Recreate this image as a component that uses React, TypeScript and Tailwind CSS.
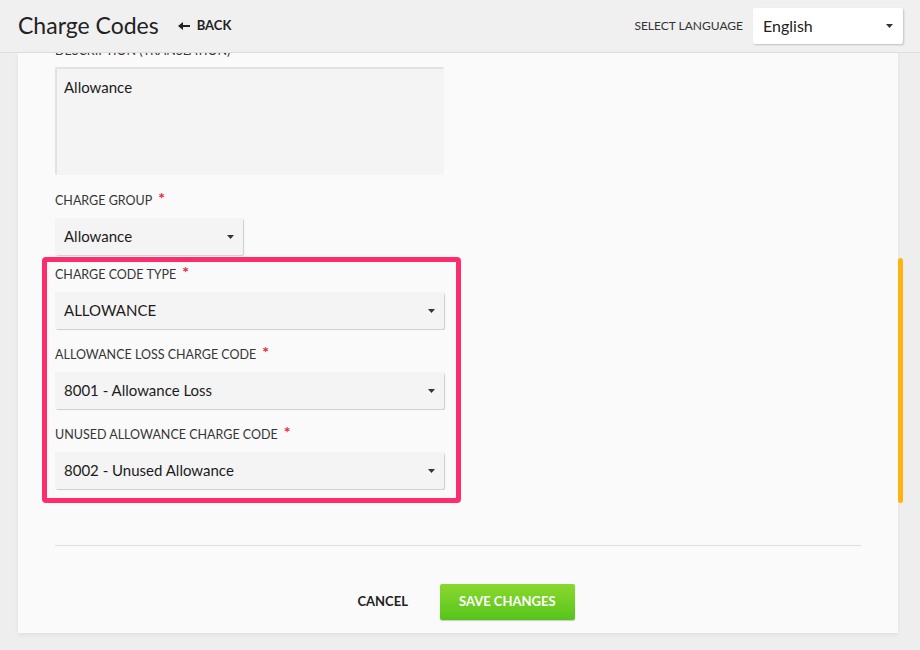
import React from "react";

function Caret() {
  return (
    <svg width="7" height="4" viewBox="0 0 7 4" className="shrink-0">
      <path d="M0 0h7L3.5 4z" fill="#333" />
    </svg>
  );
}

function Label({ text, required }: { text: string; required?: boolean }) {
  return (
    <div className="h-4 text-[12.5px] leading-4 text-[#363636] uppercase flex items-start">
      <span>{text}</span>
      {required && <span className="ml-[6px] -mt-[3px] text-[#e5263b] text-[16px] font-bold">*</span>}
    </div>
  );
}

function Select({ value, className }: { value: string; className?: string }) {
  return (
    <div
      className={
        "mt-[9px] h-[37px] bg-[#f4f4f4] rounded-[2px] shadow-[1px_1px_1px_rgba(0,0,0,0.18)] flex items-center justify-between pl-[9px] pr-[9px] text-[15px] text-[#1c1c1c] " +
        (className ?? "w-[389px]")
      }
    >
      <span>{value}</span>
      <Caret />
    </div>
  );
}

export default function App() {
  return (
    <div className="w-[920px] h-[650px] bg-[#eeeeee] relative overflow-hidden font-['Lato',sans-serif] text-[#222]">
      {/* header */}
      <div className="h-[53px] flex items-center pl-[18px] pr-[17px] border-b border-[#dedede] bg-[#f0f0f0]">
        <h1 className="text-[23px] leading-none text-[#222] -mt-[2px]">Charge Codes</h1>
        <button className="ml-[19px] flex items-center gap-[7px] text-[13px] font-bold text-[#222]">
          <svg width="12" height="8" viewBox="0 0 12 8">
            <path d="M0 4L5 0v3h7v2H5v3z" fill="#222" />
          </svg>
          BACK
        </button>
        <div className="ml-auto text-[12px] text-[#333]">SELECT LANGUAGE</div>
        <div className="ml-[10px] w-[150px] h-[36px] bg-white rounded-[2px] shadow-[1px_1px_2px_rgba(0,0,0,0.2)] flex items-center justify-between pl-[10px] pr-[10px] text-[16px] text-[#222]">
          <span>English</span>
          <Caret />
        </div>
      </div>

      {/* panel */}
      <div className="ml-[18px] w-[880px] h-[580px] bg-[#fafafa] overflow-hidden px-[37px] shadow-[0_2px_4px_rgba(0,0,0,0.06)]">
        <div className="-mt-[10px]">
          <Label text="Description (Translation)" />
          <div className="mt-[8px] w-[389px] h-[108px] bg-[#f4f4f4] border-t-2 border-l-2 border-[#e2e2e2] rounded-[2px] pl-[7px] pt-[7px] text-[15px] text-[#1c1c1c]">
            Allowance
          </div>

          <div className="mt-[18px]">
            <Label text="Charge Group" required />
            <Select value="Allowance" className="w-[188px]" />
          </div>

          <div className="mt-[2px] -ml-[13px] w-[419px] border-[5px] border-[#ff2c6c] rounded-[4px] pl-[8px] pr-[12px] pt-[5px] pb-[9px]">
            <Label text="Charge Code Type" required />
            <Select value="ALLOWANCE" />
            <div className="mt-[18px]">
              <Label text="Allowance Loss Charge Code" required />
              <Select value="8001 - Allowance Loss" />
            </div>
            <div className="mt-[18px]">
              <Label text="Unused Allowance Charge Code" required />
              <Select value="8002 - Unused Allowance" />
            </div>
          </div>

          <div className="mt-[42px] border-t border-[#dddddd]" />

          <div className="mt-[38px] flex justify-center items-center gap-4">
            <button className="px-4 h-[36px] text-[13px] font-bold text-[#222]">CANCEL</button>
            <button className="px-[19px] h-[36px] rounded-[2px] bg-gradient-to-b from-[#8ad82e] to-[#55c41a] shadow-[0_1px_1px_rgba(0,0,0,0.2)] text-[13px] font-bold text-white">
              SAVE CHANGES
            </button>
          </div>
        </div>
      </div>

      {/* scrollbar */}
      <div className="absolute left-[898px] top-[258px] w-[5px] h-[245px] rounded-full bg-[#ffb30f]" />
    </div>
  );
}
